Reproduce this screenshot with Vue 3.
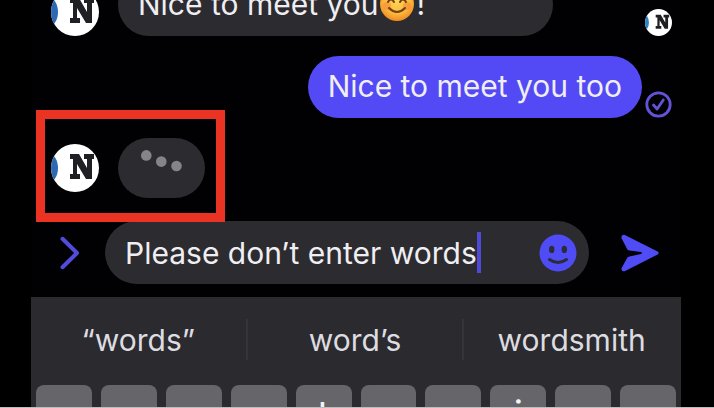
<script setup>
import { ref } from 'vue'

const draft = ref('Please don’t enter words')
const suggestions = ['“words”', 'word’s', 'wordsmith']
const keys = ['q', 'w', 'e', 'r', 't', 'y', 'u', 'i', 'o', 'p']
const letterN = 'M19 10h9l8 14v-9h-3v-5h10v5h-2v20h-6l-9-15v10h3v5H19v-5h3V15h-3z'
</script>

<template>
  <main class="page">
    <div class="phone">
      <section class="thread" aria-label="Conversation">
        <div class="row">
          <svg class="avatar" viewBox="0 0 48 48" aria-hidden="true">
            <clipPath id="face-a"><circle cx="24" cy="24" r="24" /></clipPath>
            <g clip-path="url(#face-a)">
              <rect width="48" height="48" fill="#fff" />
              <ellipse cx="-3" cy="24" rx="10" ry="15" fill="#2e69b3" />
              <path :d="letterN" fill="#202024" />
            </g>
          </svg>
          <p class="bubble received">
            <span>Nice to meet you</span>
            <svg class="emoji" viewBox="0 0 34 34" role="img" aria-label="Smiling face">
              <defs>
                <radialGradient id="skin" cx="50%" cy="40%" r="60%">
                  <stop offset="0" stop-color="#ffd65a" />
                  <stop offset="0.65" stop-color="#fbb83c" />
                  <stop offset="1" stop-color="#ee8a24" />
                </radialGradient>
              </defs>
              <circle cx="17" cy="17" r="17" fill="url(#skin)" />
              <circle cx="7" cy="19" r="4" fill="#f58a3c" opacity="0.6" />
              <circle cx="27" cy="19" r="4" fill="#f58a3c" opacity="0.6" />
              <path d="M8 15q3-5 6 0M20 15q3-5 6 0M9 21q8 8 16 0" fill="none" stroke="#75400f" stroke-width="2" stroke-linecap="round" />
            </svg>
            <span>!</span>
          </p>
          <svg class="seen" viewBox="0 0 48 48" aria-hidden="true">
            <clipPath id="face-b"><circle cx="24" cy="24" r="24" /></clipPath>
            <g clip-path="url(#face-b)">
              <rect width="48" height="48" fill="#fff" />
              <ellipse cx="-3" cy="24" rx="10" ry="15" fill="#2e84c3" />
              <path :d="letterN" fill="#202024" />
            </g>
          </svg>
        </div>

        <div class="row own">
          <p class="bubble sent">Nice to meet you too</p>
          <svg class="tick" viewBox="0 0 27 27" role="img" aria-label="Delivered">
            <circle cx="13.5" cy="13.5" r="11.7" fill="none" stroke="#6353d8" stroke-width="2.8" />
            <path d="M8.5 14l3.6 4L18.3 9" fill="none" stroke="#6353d8" stroke-width="2.8" stroke-linecap="round" stroke-linejoin="round" />
          </svg>
        </div>

        <div class="row typing">
          <svg class="avatar" viewBox="0 0 48 48" aria-hidden="true">
            <clipPath id="face-c"><circle cx="24" cy="24" r="24" /></clipPath>
            <g clip-path="url(#face-c)">
              <rect width="48" height="48" fill="#fff" />
              <ellipse cx="-3" cy="24" rx="10" ry="15" fill="#2e69b3" />
              <path :d="letterN" fill="#202024" />
            </g>
          </svg>
          <svg class="dots" viewBox="0 0 87 60" role="img" aria-label="Typing">
            <rect width="87" height="60" rx="30" fill="#2c2b2f" />
            <g fill="#858488">
              <circle cx="28.3" cy="17.4" r="5.3" />
              <circle cx="43.3" cy="23.6" r="5.3" />
              <circle cx="58.5" cy="28" r="5.3" />
            </g>
          </svg>
          <span class="highlight"></span>
        </div>
      </section>

      <form class="composer" @submit.prevent>
        <button class="icon more" type="button" aria-label="More">
          <svg width="20" height="34" viewBox="0 0 20 34">
            <path d="M2.5 2.8L17 17 2.5 31.2" fill="none" stroke="#514cde" stroke-width="4" stroke-linecap="round" stroke-linejoin="round" />
          </svg>
        </button>
        <div class="field">
          <input v-model="draft" class="draft" type="text" size="1" aria-label="Message" />
          <span class="caret"></span>
          <button class="icon smiley" type="button" aria-label="Emoji">
            <svg width="38" height="38" viewBox="0 0 38 38">
              <circle cx="19" cy="19" r="18.5" fill="#4f4cf5" />
              <ellipse cx="12.7" cy="15.4" rx="2.7" ry="3.6" fill="#2c2b38" />
              <ellipse cx="25.3" cy="15.4" rx="2.7" ry="3.6" fill="#2c2b38" />
              <path d="M10.5 25.5q8.5 6 17 0" fill="none" stroke="#2c2b38" stroke-width="3" stroke-linecap="round" />
            </svg>
          </button>
        </div>
        <button class="icon send" type="submit" aria-label="Send">
          <svg width="38" height="38" viewBox="0 0 38 38">
            <path d="M3.8.9L36.6 17.4q2.2 1.6 0 3.2L4.2 37Q.2 38.2.4 34.4L6.4 23.6q.8-1 2-1.2L20 20q2-1 0-2L8.400 16.600q-1.200-.2-2-1.200L.4 4Q0 .2 3.800.9z" fill="#4f4cf5" />
          </svg>
        </button>
      </form>

      <section class="keyboard" aria-label="Keyboard">
        <div class="suggestions">
          <button v-for="word in suggestions" :key="word" class="suggestion" type="button">{{ word }}</button>
        </div>
        <div class="keys">
          <button v-for="key in keys" :key="key" class="key" type="button">{{ key }}</button>
        </div>
      </section>
    </div>
  </main>
</template>

<style>
body {
  margin: 0;
  background: #000;
}
</style>

<style scoped>
.page {
  box-sizing: border-box;
  height: 100vh;
  padding: 0 33px 0 31px;
  border-bottom: 1px solid #bcbcbc;
  background: #000;
  color: #efeef2;
  font-family: Inter, "Liberation Sans", sans-serif;
  font-size: 30px;
  line-height: 36px;
}

.phone {
  display: flex;
  flex-direction: column;
  height: 100%;
  background: #010003;
}

.thread {
  display: flex;
  flex: 1;
  flex-direction: column;
  justify-content: flex-end;
  gap: 20px;
  min-height: 0;
  padding: 0 9px 23px 20px;
}

.row {
  display: flex;
  flex: none;
  align-items: flex-end;
  gap: 19px;
}

.row.own {
  justify-content: flex-end;
  gap: 3px;
}

.row.typing {
  position: relative;
  align-items: center;
}

.avatar {
  flex: none;
  width: 48px;
  height: 48px;
}

.seen {
  width: 27px;
  height: 27px;
  margin-left: auto;
}

.tick {
  width: 27px;
  height: 27px;
}

.bubble {
  box-sizing: border-box;
  margin: 0;
  padding: 12px 20px 14px;
  border-radius: 31px;
}

.received {
  display: flex;
  align-items: center;
  gap: 2px;
  flex: 0 0 70%;
  background: #2c2b2f;
}

.sent {
  background: #544af5;
}

.emoji {
  width: 34px;
  height: 34px;
}

.dots {
  width: 87px;
  height: 60px;
}

.highlight {
  position: absolute;
  z-index: 1;
  inset: -28px auto -24px -15px;
  width: 171px;
  border: 9px solid #ea3323;
}

.composer {
  display: flex;
  align-items: center;
  gap: 25px;
  padding: 0 22px 13px 29px;
}

.icon {
  display: flex;
  flex: none;
  padding: 0;
  border: 0;
  background: none;
}

.send {
  margin-left: 7px;
}

.field {
  display: flex;
  flex: 1;
  align-items: center;
  min-width: 0;
  height: 63px;
  padding: 0 12px 0 20px;
  border-radius: 32px;
  background: #2c2b2f;
}

.draft {
  field-sizing: content;
  min-width: 0;
  padding: 0;
  border: 0;
  outline: 0;
  background: none;
  color: inherit;
  font: inherit;
}

.caret {
  flex: none;
  width: 4px;
  height: 41px;
  background: #4e49d6;
}

.smiley {
  margin-left: auto;
}

.keyboard {
  flex: none;
  background: #2b2a2e;
}

.suggestions {
  display: grid;
  grid-template-columns: repeat(3, 1fr);
  padding: 22px 0 25px;
}

.suggestion {
  height: 41px;
  padding: 0;
  border: 0;
  border-right: 2px solid #353438;
  background: none;
  color: #dddce0;
  font: inherit;
}

.suggestion:last-child {
  border-right-color: transparent;
}

.keys {
  display: grid;
  grid-template-columns: repeat(10, 1fr);
  gap: 9px;
  height: 22px;
  padding: 0 5px;
  overflow: hidden;
}

.key {
  box-sizing: border-box;
  height: 84px;
  padding: 0 0 26px;
  border: 0;
  border-radius: 8px;
  background: #666569;
  color: #f4f4f6;
  font: inherit;
  font-size: 38px;
}
</style>
